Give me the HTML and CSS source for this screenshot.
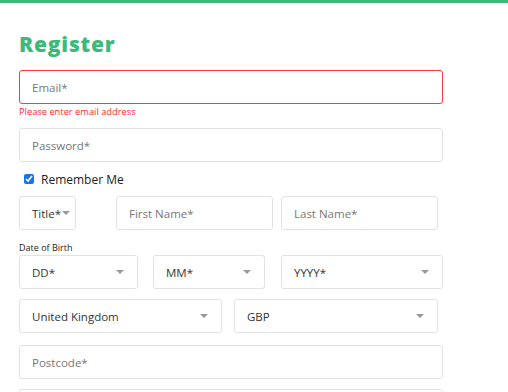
FILE: index.html
```html
<!DOCTYPE html>
<html>
<head>
<meta charset="utf-8">
<link rel="stylesheet" href="styles.css">
</head>
<body>
<div class="topbar"></div>
<div class="page">
  <h1 class="title">Register</h1>
  <div class="field full error"><span class="ph">Email*</span></div>
  <div class="err-msg">Please enter email address</div>
  <div class="field full pw"><span class="ph">Password*</span></div>
  <label class="remember"><input type="checkbox" checked class="cb"><span>Remember Me</span></label>
  <div class="row names">
    <div class="field sel title-sel"><span class="val">Title*</span><span class="caret tight"></span></div>
    <div class="field first"><span class="ph">First Name*</span></div>
    <div class="field last"><span class="ph">Last Name*</span></div>
  </div>
  <div class="dob-label">Date of Birth</div>
  <div class="row dob">
    <div class="field sel dd"><span class="val">DD*</span><span class="caret"></span></div>
    <div class="field sel mm"><span class="val">MM*</span><span class="caret"></span></div>
    <div class="field sel yy"><span class="val">YYYY*</span><span class="caret"></span></div>
  </div>
  <div class="row country">
    <div class="field sel uk"><span class="val">United Kingdom</span><span class="caret"></span></div>
    <div class="field sel gbp"><span class="val">GBP</span><span class="caret"></span></div>
  </div>
  <div class="field full post"><span class="ph">Postcode*</span></div>
  <div class="field full next"></div>
</div>
</body>
</html>
```
FILE: styles.css
```css
html, body {
  margin: 0;
  padding: 0;
  background: #fff;
}
body {
  font-family: "Open Sans", "DejaVu Sans", sans-serif;
  overflow: hidden;
}
.topbar {
  height: 3px;
  background: #3dba7b;
}
.page {
  padding-left: 19px;
}
.title {
  margin: 0 0 12px 0;
  padding-top: 27px;
  height: 28px;
  font-family: "Open Sans", sans-serif;
  font-weight: 800;
  font-size: 21px;
  line-height: 28px;
  letter-spacing: 0.8px;
  color: #3dba7b;
}
.field {
  box-sizing: border-box;
  height: 34px;
  border: 1px solid #e2e2e2;
  border-radius: 3px;
  display: flex;
  align-items: center;
  padding-left: 12px;
  padding-right: 12px;
  font-size: 11.5px;
  background: #fff;
}
.full {
  width: 424px;
}
.error {
  border-color: #ff3b3b;
}
.ph {
  color: #777;
}
.val {
  color: #333;
}
.err-msg {
  font-size: 9.3px;
  color: #ff2b2b;
  margin-top: 2px;
  height: 22px;
  line-height: 12px;
}
.remember {
  display: flex;
  align-items: center;
  height: 34px;
  font-size: 12px;
  color: #222;
}
.cb {
  margin: 0 7px 0 5px;
  width: 10px;
  height: 10px;
  accent-color: #1a73e8;
}
.row {
  display: flex;
}
.sel {
  justify-content: space-between;
}
.caret {
  width: 0;
  height: 0;
  border-left: 4px solid transparent;
  border-right: 4px solid transparent;
  border-top: 4px solid #999;
  margin-right: 1px;
}
.caret.tight {
  margin-left: 1px;
}
.title-sel {
  width: 57px;
  padding-right: 5px;
  justify-content: flex-start;
}
.first {
  width: 157px;
  margin-left: 40px;
}
.last {
  width: 157px;
  margin-left: 8px;
}
.dob-label {
  font-size: 9px;
  color: #222;
  margin-top: 10px;
  height: 15px;
  line-height: 15px;
}
.dd { width: 119px; }
.mm { width: 112px; margin-left: 15px; }
.yy { width: 162px; margin-left: 16px; }
.country {
  margin-top: 10px;
}
.uk { width: 203px; }
.gbp { width: 204px; margin-left: 12px; }
.post {
  margin-top: 12px;
}
.next {
  margin-top: 10px;
}
```
